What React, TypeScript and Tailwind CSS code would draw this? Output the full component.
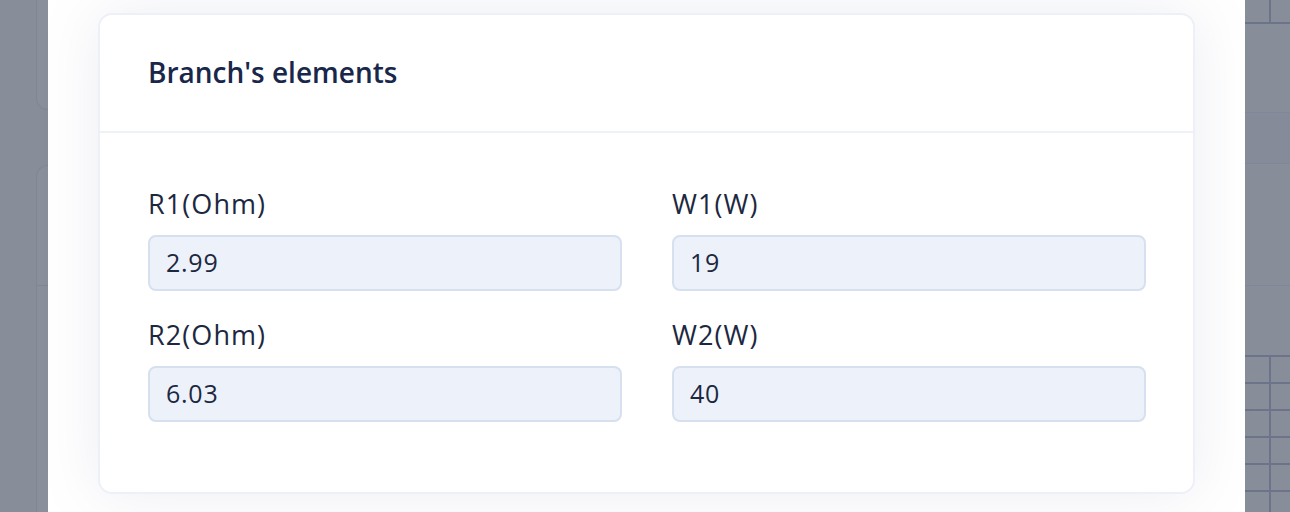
const font = { fontFamily: "'Open Sans', 'Noto Sans', sans-serif" };

type Field = { label: string; value: string };

const fields: Field[] = [
  { label: "R1(Ohm)", value: "2.99" },
  { label: "W1(W)", value: "19" },
  { label: "R2(Ohm)", value: "6.03" },
  { label: "W2(W)", value: "40" },
];

const LeftBackdrop = () => (
  <div className="flex h-full w-[48px] shrink-0 flex-col pl-[36px]">
    <div className="-mt-4 h-[126px] rounded-bl-[12px] border-b border-l border-[#7f8697] bg-[#8a909b]" />
    <div className="mt-[55px] flex flex-1 flex-col rounded-tl-[12px] border-l border-t border-[#7f8697] bg-[#8a909b]">
      <div className="h-[120px] border-b border-[#7f8697]" />
    </div>
  </div>
);

const RightBackdrop = () => (
  <div className="flex h-full flex-1 flex-col">
    <div className="flex h-[24px] shrink-0 border-b-2 border-[#6c748a]">
      <div className="w-[26px] border-r-2 border-[#6c748a]" />
    </div>
    <div className="h-[88px] shrink-0" />
    <div className="h-[52px] shrink-0 border-y border-[#7f889b] bg-[#858b98]" />
    <div className="h-[122px] shrink-0 border-b border-[#7f889b]" />
    <div className="h-[69px] shrink-0" />
    <div className="flex flex-1 flex-col border-t-2 border-[#6c748a]">
      {[0, 1, 2, 3, 4, 5].map((i) => (
        <div key={i} className="flex h-[27px] shrink-0 border-b-2 border-[#6c748a]">
          <div className="w-[26px] border-r-2 border-[#6c748a]" />
        </div>
      ))}
    </div>
  </div>
);

const FieldBox = ({ label, value }: Field) => (
  <div className="flex flex-col">
    <label className="text-[27px] leading-[30px] tracking-[0.04em] text-[#1c2840]">{label}</label>
    <div className="mt-[16px] flex h-[56px] items-center rounded-[8px] border-2 border-[#d6e0ef] bg-[#edf2fa] px-[16px] text-[25px] tracking-[0.03em] text-[#1c2840]">
      {value}
    </div>
  </div>
);

export default function App() {
  return (
    <div className="flex h-[512px] w-full overflow-hidden bg-[#878d99]" style={font}>
      <LeftBackdrop />
      <div className="h-full w-[1197px] shrink-0 bg-white px-[50px] pt-[13px]">
        <div className="overflow-hidden rounded-[14px] border-2 border-[#edf1f7] bg-white shadow-[0_0_60px_rgba(120,130,160,0.14)]">
          <div className="flex h-[118px] items-center border-b-2 border-[#eef2f7] px-[48px] pb-[2px]">
            <h2 className="text-[28px] font-semibold text-[#18274a]">Branch's elements</h2>
          </div>
          <div className="grid grid-cols-2 gap-x-[50px] gap-y-[29px] pb-[70px] pl-[48px] pr-[47px] pt-[56px]">
            {fields.map((f) => (
              <FieldBox key={f.label} {...f} />
            ))}
          </div>
        </div>
      </div>
      <RightBackdrop />
    </div>
  );
}
